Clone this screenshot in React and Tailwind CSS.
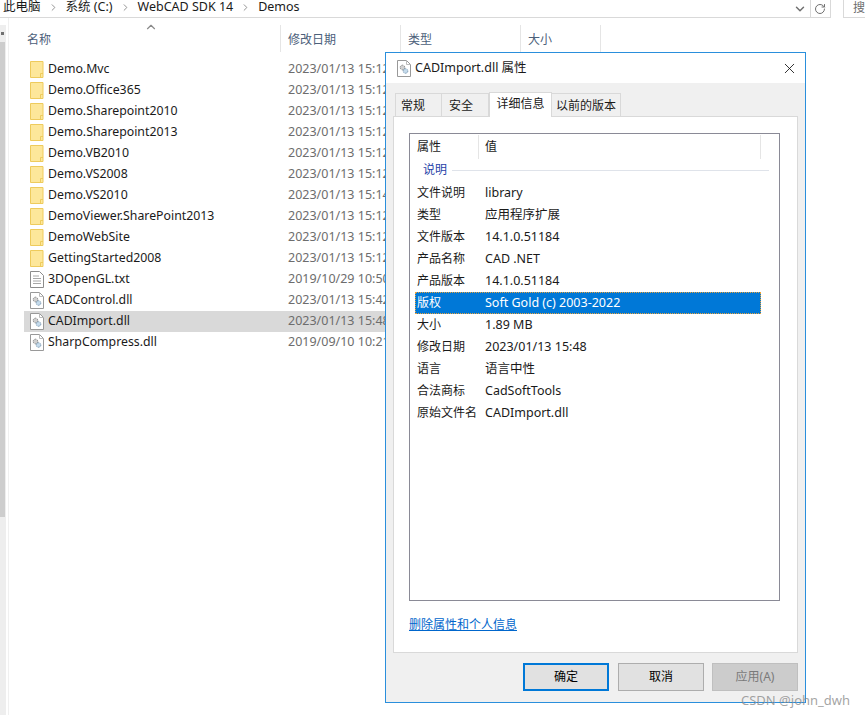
import React from "react";
import { ChevronDown, ChevronRight, ChevronUp, RotateCw, X } from "lucide-react";

const files = [
  { name: "Demo.Mvc", date: "2023/01/13 15:12", type: "folder" },
  { name: "Demo.Office365", date: "2023/01/13 15:12", type: "folder" },
  { name: "Demo.Sharepoint2010", date: "2023/01/13 15:12", type: "folder" },
  { name: "Demo.Sharepoint2013", date: "2023/01/13 15:12", type: "folder" },
  { name: "Demo.VB2010", date: "2023/01/13 15:12", type: "folder" },
  { name: "Demo.VS2008", date: "2023/01/13 15:12", type: "folder" },
  { name: "Demo.VS2010", date: "2023/01/13 15:14", type: "folder" },
  { name: "DemoViewer.SharePoint2013", date: "2023/01/13 15:12", type: "folder" },
  { name: "DemoWebSite", date: "2023/01/13 15:12", type: "folder" },
  { name: "GettingStarted2008", date: "2023/01/13 15:12", type: "folder" },
  { name: "3DOpenGL.txt", date: "2019/10/29 10:50", type: "txt" },
  { name: "CADControl.dll", date: "2023/01/13 15:42", type: "dll" },
  { name: "CADImport.dll", date: "2023/01/13 15:48", type: "dll", selected: true },
  { name: "SharpCompress.dll", date: "2019/09/10 10:21", type: "dll" },
];

const props = [
  ["文件说明", "library"],
  ["类型", "应用程序扩展"],
  ["文件版本", "14.1.0.51184"],
  ["产品名称", "CAD .NET"],
  ["产品版本", "14.1.0.51184"],
  ["版权", "Soft Gold (c) 2003-2022", true],
  ["大小", "1.89 MB"],
  ["修改日期", "2023/01/13 15:48"],
  ["语言", "语言中性"],
  ["合法商标", "CadSoftTools"],
  ["原始文件名", "CADImport.dll"],
];

function FolderIcon() {
  return (
    <svg width="14" height="17" viewBox="0 0 14 17" className="shrink-0">
      <path d="M.5.5h12.5v16H.5z" fill="#fde79a" stroke="#eecb5c" />
      <path d="M10.5 16.5v-4h2.500" fill="none" stroke="#eecb5c" />
    </svg>
  );
}

function TxtIcon() {
  return (
    <svg width="14" height="17" viewBox="0 0 14 17" className="shrink-0">
      <path d="M.5.500h9l4 4v12H.5z" fill="#fff" stroke="#8c8c8c" />
      <path d="M3 5h6M3 7.500h8M3 10h8M3 12.500h8" stroke="#a8a8a8" />
    </svg>
  );
}

function DllIcon() {
  return (
    <svg width="14" height="17" viewBox="0 0 14 17" className="shrink-0">
      <path d="M.5.500h9l4 4v12H.5z" fill="#fff" stroke="#999" />
      <path d="M9.500.500v4h4" fill="none" stroke="#bbb" />
      <circle cx="5.500" cy="7.500" r="2.300" fill="#d0d0d0" stroke="#8a8a8a" strokeDasharray="1.500 .7" />
      <circle cx="8.500" cy="11" r="2.300" fill="#c5dbec" stroke="#7f9db5" strokeDasharray="1.500 .7" />
    </svg>
  );
}

function FileRow({ file }) {
  return (
    <div className={`flex items-center h-[21px] pl-[6px] ${file.selected ? "bg-[#d9d9d9]" : ""}`}>
      {file.type === "folder" && <FolderIcon />}
      {file.type === "txt" && <TxtIcon />}
      {file.type === "dll" && <DllIcon />}
      <span className="ml-[4px] w-[240px] shrink-0 text-[12.300px] text-[#1a1a1a] whitespace-nowrap">{file.name}</span>
      <span className="text-[#6d6d6d] whitespace-nowrap">{file.date}</span>
    </div>
  );
}

function PropRow({ label, value, selected }) {
  return (
    <div
      className={`flex items-center h-[22px] pl-[2px] ${
        selected ? "bg-[#0078d7] text-white outline outline-1 -outline-offset-1 outline-dotted outline-[#e8a33d]" : "text-[#1a1a1a]"
      }`}
    >
      <span className="w-[68px] shrink-0 text-[12px] whitespace-nowrap">{label}</span>
      <span className="whitespace-nowrap">{value}</span>
    </div>
  );
}

function Crumb({ children }) {
  return <span className="whitespace-nowrap text-[#1a1a1a] leading-none">{children}</span>;
}

function Sep() {
  return <ChevronRight size={11} strokeWidth={2} className="text-[#8a8a8a] mx-[2px] shrink-0" />;
}

function HeaderCell({ width, children }) {
  return (
    <div className={`${width} h-[27px] border-r border-[#e5e5e5] pl-[7px] pt-[2px] flex items-center text-[12px] text-[#4c607a]`}>
      {children}
    </div>
  );
}

function DialogButton({ children, className }) {
  return <div className={`w-[86px] h-[28px] flex items-center justify-center ${className}`}>{children}</div>;
}

export default function App() {
  return (
    <div className="relative w-[865px] h-[715px] overflow-hidden bg-white text-[12.500px] font-['Noto_Sans','Noto_Sans_CJK_SC',sans-serif]">
      {/* address bar */}
      <div className="flex h-[18px] items-start">
        <div className="w-[831px] h-[18px] border-b border-r border-[#d9d9d9] flex pl-[3px]">
          <div className="flex items-center gap-[5px] pb-[2px]">
            <Crumb>此电脑</Crumb>
            <Sep />
            <Crumb>系统 (C:)</Crumb>
            <Sep />
            <Crumb>WebCAD SDK 14</Crumb>
            <Sep />
            <Crumb>Demos</Crumb>
          </div>
          <div className="ml-auto flex items-center">
            <ChevronDown size={14} strokeWidth={2.500} className="text-[#707070] mr-[3px]" />
            <div className="w-[20px] h-full border-l border-[#d9d9d9] flex items-center justify-center">
              <RotateCw size={12} className="text-[#707070]" />
            </div>
          </div>
        </div>
        <div className="ml-[12px] flex-1 h-[18px] border-b border-l border-[#d9d9d9] pl-[9px] pb-[2px] flex items-center text-[12px] leading-none text-[#6d6d6d]">
          搜
        </div>
      </div>

      <div className="flex h-[697px]">
        {/* scrollbar */}
        <div className="w-[6px] mt-[7px] bg-[#eeeeee] flex flex-col">
          <div className="h-[17px] flex items-center">
            <div className="w-[3px] h-[3px] ml-[1px] bg-[#707070]" />
          </div>
          <div className="h-[475px] w-[5px] bg-[#cdcdcd]" />
        </div>
        <div className="w-[3px] border-r border-[#f0f0f0] mr-[15px]" />

        {/* file list */}
        <div className="flex-1">
          <div className="relative flex mt-[7px] ml-[-24px] pl-[24px]">
            <ChevronUp size={14} className="absolute left-[144px] top-[-5px] text-[#8a8a8a]" />
            <div className="w-[257px] h-[27px] border-r border-[#e5e5e5] pl-[3px] pt-[2px] flex items-center text-[12px] text-[#4c607a]">名称</div>
            <HeaderCell width="w-[120px]">修改日期</HeaderCell>
            <HeaderCell width="w-[120px]">类型</HeaderCell>
            <HeaderCell width="w-[80px]">大小</HeaderCell>
          </div>
          <div className="mt-[7px] w-[361px]">
            {files.map((f) => (
              <FileRow key={f.name} file={f} />
            ))}
          </div>
        </div>
      </div>

      {/* properties window */}
      <div className="absolute left-[385px] top-[52px] w-[421px] h-[651px] border border-[#2a8fdc] bg-[#f0f0f0] flex flex-col">
        <div className="h-[30px] bg-white flex items-center pl-[11px] pr-[7px] text-[#1a1a1a]">
          <DllIcon />
          <span className="ml-[4px]">CADImport.dll 属性</span>
          <X size={17} strokeWidth={1.200} className="ml-auto text-[#111]" />
        </div>

        <div className="flex items-end h-[33px] pl-[9px] text-[12px] text-[#1a1a1a]">
          <div className="w-[47px] h-[23px] border border-b-0 border-[#d9d9d9] flex items-center pl-[5px] pt-[2px]">常规</div>
          <div className="w-[47px] h-[23px] border border-b-0 border-l-0 border-[#d9d9d9] flex items-center pl-[7px] pt-[2px]">安全</div>
          <div className="w-[63px] h-[25px] -mb-[1px] relative z-10 bg-white border border-b-0 border-[#d9d9d9] flex items-center justify-center pb-[2px]">详细信息</div>
          <div className="w-[69px] h-[23px] border border-b-0 border-l-0 border-[#d9d9d9] flex items-center pl-[4px] pt-[2px]">以前的版本</div>
        </div>

        <div className="mx-[7px] h-[537px] bg-white border border-[#d9d9d9] pt-[16px] pl-[15px]">
          <div className="w-[371px] h-[468px] border border-[#8a8a96] pl-[5px] pr-[18px] pt-[1px]">
            <div className="flex h-[24px] text-[12px] text-[#1a1a1a]">
              <div className="w-[64px] shrink-0 pl-[2px] border-r border-[#e5e5e5] flex items-center">属性</div>
              <div className="w-[282px] shrink-0 pl-[6px] border-r border-[#e5e5e5] flex items-center">值</div>
            </div>
            <div className="flex items-center h-[22px] pl-[8px] text-[12px] text-[#1f3fa8]">
              <span>说明</span>
              <div className="flex-1 ml-[5px] mr-[-8px] h-px bg-[#dfe3ea]" />
            </div>
            <div className="mt-[1px]">
              {props.map(([label, value, selected]) => (
                <PropRow key={label} label={label} value={value} selected={selected} />
              ))}
            </div>
          </div>
          <div className="mt-[15px] text-[12px] text-[#0066cc] underline">删除属性和个人信息</div>
        </div>

        <div className="flex justify-end pt-[10px] pr-[7px] text-[12px] text-black">
          <DialogButton className="border-2 border-[#0078d7] bg-[#e1e1e1] mr-[9px]">确定</DialogButton>
          <DialogButton className="border border-[#adadad] bg-[#e1e1e1] mr-[8px]">取消</DialogButton>
          <DialogButton className="border border-[#bfbfbf] bg-[#cccccc] text-[#7a7a7a]">应用(A)</DialogButton>
        </div>
      </div>

      <div className="absolute left-[741px] top-[691px] text-[13px] text-[#8c8c8c]/80 whitespace-nowrap">CSDN @john_dwh</div>
    </div>
  );
}
